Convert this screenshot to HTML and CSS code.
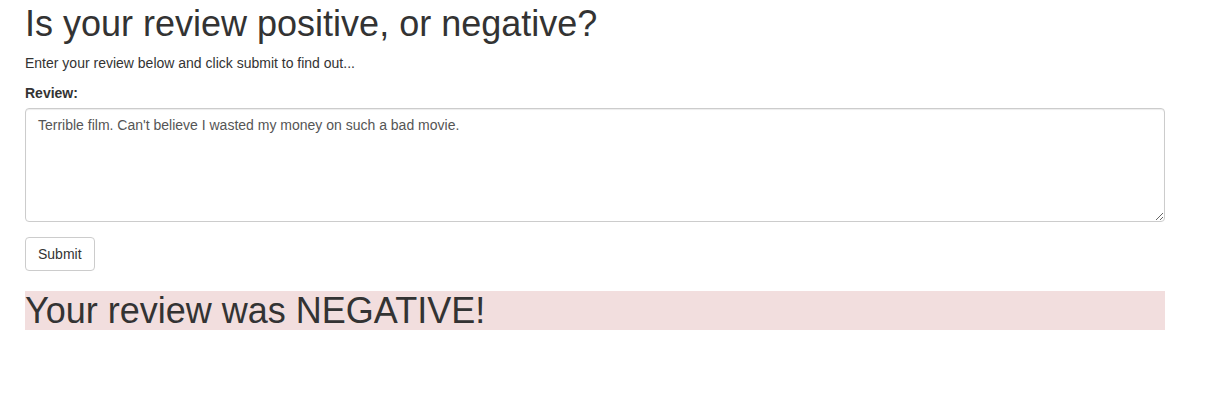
FILE: index.html
```html
<!DOCTYPE html>
<html lang="en">
<head>
<meta charset="utf-8">
<title>Review sentiment</title>
<link rel="stylesheet" href="styles.css">
</head>
<body>
<main class="container">
  <h1 class="title">Is your review positive, or negative?</h1>
  <p class="intro">Enter your review below and click submit to find out...</p>
  <form class="review-form">
    <label class="label" for="review">Review:</label>
    <textarea class="review-input" id="review" rows="5">Terrible film. Can't believe I wasted my money on such a bad movie.</textarea>
    <button class="submit" type="submit">Submit</button>
  </form>
  <h1 class="result">Your review was NEGATIVE!</h1>
</main>
</body>
</html>
```

FILE: styles.css
```css
* {
  box-sizing: border-box;
}

body {
  margin: 0;
  background: #fff;
  color: #333;
  font-family: "Helvetica Neue", "Liberation Sans", Arial, sans-serif;
  font-size: 14px;
  line-height: 20px;
}

.container {
  max-width: 1170px;
  margin: 0 25px 0 10px;
  padding: 4px 15px 0;
}

.title,
.result {
  margin: 0;
  font-size: 36px;
  font-weight: 500;
  line-height: 39px;
}

.intro {
  margin: 10px 0;
}

.review-form {
  display: flex;
  flex-direction: column;
  align-items: flex-start;
}

.label {
  margin-bottom: 5px;
  font-weight: 700;
}

.review-input {
  display: block;
  width: 100%;
  margin: 0 0 15px;
  padding: 6px 12px;
  border: 1px solid #ccc;
  border-radius: 4px;
  background: #fff;
  box-shadow: inset 0 1px 1px rgba(0, 0, 0, 0.075);
  color: #555;
  font: inherit;
  resize: vertical;
}

.submit {
  padding: 6px 12px;
  border: 1px solid #ccc;
  border-radius: 4px;
  background: #fff;
  color: #333;
  font: inherit;
  cursor: pointer;
}

.result {
  margin-top: 20px;
  background: #f2dede;
}
```
